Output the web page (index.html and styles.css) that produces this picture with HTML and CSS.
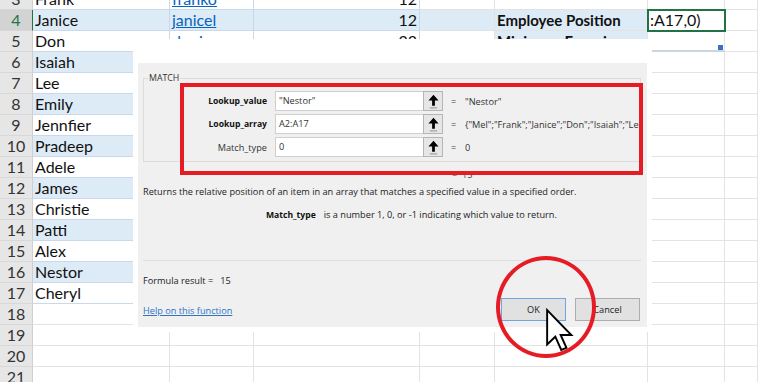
FILE: index.html
```html
<!DOCTYPE html>
<html>
<head>
<meta charset="utf-8">
<link rel="stylesheet" href="styles.css">
</head>
<body>
<div class="sheet">
  <div class="row"><div class="rh">3</div><div class="c t">Frank</div><div class="c t"><span class="lnk">franko</span></div><div class="c t num">12</div><div class="c"></div><div class="c"></div><div class="c"></div><div class="c"></div></div>
  <div class="row"><div class="rh sel">4</div><div class="c t bl">Janice</div><div class="c t bl"><span class="lnk">janicel</span></div><div class="c t bl num">12</div><div class="c bl"></div><div class="c bl b">Employee Position</div><div class="c active">:A17,0)</div><div class="c"></div></div>
  <div class="row"><div class="rh">5</div><div class="c t">Don</div><div class="c t"><span class="lnk">donj</span></div><div class="c t num">23</div><div class="c"></div><div class="c bl b">Minimum Experience</div><div class="c selbot"></div><div class="c"></div></div>
  <div class="row"><div class="rh">6</div><div class="c t bl">Isaiah</div><div class="c t bl"></div><div class="c t bl"></div><div class="c"></div><div class="c"></div><div class="c"></div><div class="c"></div></div>
  <div class="row"><div class="rh">7</div><div class="c t">Lee</div><div class="c t"></div><div class="c t"></div><div class="c"></div><div class="c"></div><div class="c"></div><div class="c"></div></div>
  <div class="row"><div class="rh">8</div><div class="c t bl">Emily</div><div class="c t bl"></div><div class="c t bl"></div><div class="c"></div><div class="c"></div><div class="c"></div><div class="c"></div></div>
  <div class="row"><div class="rh">9</div><div class="c t">Jennfier</div><div class="c t"></div><div class="c t"></div><div class="c"></div><div class="c"></div><div class="c"></div><div class="c"></div></div>
  <div class="row"><div class="rh">10</div><div class="c t bl">Pradeep</div><div class="c t bl"></div><div class="c t bl"></div><div class="c"></div><div class="c"></div><div class="c"></div><div class="c"></div></div>
  <div class="row"><div class="rh">11</div><div class="c t">Adele</div><div class="c t"></div><div class="c t"></div><div class="c"></div><div class="c"></div><div class="c"></div><div class="c"></div></div>
  <div class="row"><div class="rh">12</div><div class="c t bl">James</div><div class="c t bl"></div><div class="c t bl"></div><div class="c"></div><div class="c"></div><div class="c"></div><div class="c"></div></div>
  <div class="row"><div class="rh">13</div><div class="c t">Christie</div><div class="c t"></div><div class="c t"></div><div class="c"></div><div class="c"></div><div class="c"></div><div class="c"></div></div>
  <div class="row"><div class="rh">14</div><div class="c t bl">Patti</div><div class="c t bl"></div><div class="c t bl"></div><div class="c"></div><div class="c"></div><div class="c"></div><div class="c"></div></div>
  <div class="row"><div class="rh">15</div><div class="c t">Alex</div><div class="c t"></div><div class="c t"></div><div class="c"></div><div class="c"></div><div class="c"></div><div class="c"></div></div>
  <div class="row"><div class="rh">16</div><div class="c t bl">Nestor</div><div class="c t bl"></div><div class="c t bl"></div><div class="c"></div><div class="c"></div><div class="c"></div><div class="c"></div></div>
  <div class="row"><div class="rh">17</div><div class="c t">Cheryl</div><div class="c t"></div><div class="c t"></div><div class="c"></div><div class="c"></div><div class="c"></div><div class="c"></div></div>
  <div class="row"><div class="rh">18</div><div class="c"></div><div class="c"></div><div class="c"></div><div class="c"></div><div class="c"></div><div class="c"></div><div class="c"></div></div>
  <div class="row"><div class="rh">19</div><div class="c"></div><div class="c"></div><div class="c"></div><div class="c"></div><div class="c"></div><div class="c"></div><div class="c"></div></div>
  <div class="row"><div class="rh">20</div><div class="c"></div><div class="c"></div><div class="c"></div><div class="c"></div><div class="c"></div><div class="c"></div><div class="c"></div></div>
  <div class="row"><div class="rh">21</div><div class="c"></div><div class="c"></div><div class="c"></div><div class="c"></div><div class="c"></div><div class="c"></div><div class="c"></div></div>
</div>

<div class="dialog">
  <div class="dlg-body">
    <div class="group">
      <span class="group-title">MATCH</span>
      <div class="arg">
        <span class="arg-label strong">Lookup_value</span>
        <div class="arg-input">"Nestor"</div>
        <span class="ref-btn"><svg width="11" height="15" viewBox="0 0 12 16"><polygon points="6,0.5 11.5,7 7.5,7 7.5,12.5 4.5,12.5 4.5,7 0.5,7" fill="#000"/><rect x="2" y="14.5" width="8" height="1" fill="#8a8a8a"/></svg></span>
        <span class="eq">=</span>
        <span class="arg-val">"Nestor"</span>
      </div>
      <div class="arg">
        <span class="arg-label strong">Lookup_array</span>
        <div class="arg-input">A2:A17</div>
        <span class="ref-btn"><svg width="11" height="15" viewBox="0 0 12 16"><polygon points="6,0.5 11.5,7 7.5,7 7.5,12.5 4.5,12.5 4.5,7 0.5,7" fill="#000"/><rect x="2" y="14.5" width="8" height="1" fill="#8a8a8a"/></svg></span>
        <span class="eq">=</span>
        <span class="arg-val">{"Mel";"Frank";"Janice";"Don";"Isaiah";"Lee";"Emily"</span>
      </div>
      <div class="arg">
        <span class="arg-label">Match_type</span>
        <div class="arg-input">0</div>
        <span class="ref-btn"><svg width="11" height="15" viewBox="0 0 12 16"><polygon points="6,0.5 11.5,7 7.5,7 7.5,12.5 4.5,12.5 4.5,7 0.5,7" fill="#000"/><rect x="2" y="14.5" width="8" height="1" fill="#8a8a8a"/></svg></span>
        <span class="eq">=</span>
        <span class="arg-val">0</span>
      </div>
    </div>
    <div class="result-eq">= &nbsp;15</div>
    <p class="desc">Returns the relative position of an item in an array that matches a specified value in a specified order.</p>
    <p class="argdesc"><b class="argname">Match_type</b>is a number 1, 0, or -1 indicating which value to return.</p>
    <div class="sep"></div>
    <div class="formula">Formula result = &nbsp; 15</div>
    <div class="foot">
      <span class="help">Help on this function</span>
      <div class="btns">
        <span class="btn ok">OK</span>
        <span class="btn">Cancel</span>
      </div>
    </div>
  </div>
</div>

<div class="redbox"></div>
<div class="redcircle"></div>
<svg class="cursor" width="30" height="45" viewBox="-1 -1 14 21"><polygon points="0,0 0,16 3.8,12.4 6.6,18.6 9,17.6 6.3,11.6 11.3,11.6" fill="#fff" stroke="#000" stroke-width="0.9" stroke-linejoin="miter"/></svg>
</body>
</html>
```

FILE: styles.css
```css
html, body {
  margin: 0;
  padding: 0;
  background: #fff;
}
body {
  width: 758px;
  height: 382px;
  overflow: hidden;
  position: relative;
  font-family: Lato, "Open Sans", sans-serif;
}

/* spreadsheet */
.sheet {
  margin-top: -11px;
}
.row {
  display: grid;
  grid-template-columns: 33px 137px 84px 166px 75px 153px 77px 1fr;
  height: 21px;
}
.row > div {
  box-sizing: border-box;
  height: 21px;
  border-right: 1px solid #e3e3e3;
  border-bottom: 1px solid #e3e3e3;
  font-size: 16px;
  line-height: 20px;
  color: #111;
  padding: 0 2px;
  white-space: nowrap;
  overflow: hidden;
}
.row > .rh {
  background: #e6e6e6;
  text-align: center;
  color: #333;
  border-right: 1px solid #cfcfcf;
  border-bottom: 1px solid #d8d8d8;
  padding: 0;
}
.row > .rh.sel {
  background: #d3d3d3;
  color: #217346;
  border-right: 1px solid #217346;
}
.row > .t {
  border-right-color: #c9d8ea;
  border-bottom-color: #c9d8ea;
}
.row > .bl {
  background: #ddebf7;
}
.row > .num {
  text-align: right;
}
.row > .b {
  font-weight: 700;
  font-size: 15px;
}
.lnk {
  color: #0563c1;
  text-decoration: underline;
}
.row > .active {
  outline: 2px solid #217346;
  outline-offset: -1px;
  position: relative;
  z-index: 1;
  overflow: visible;
}
.row > .selbot {
  border-bottom: 2px solid #c9d5e2;
  position: relative;
  overflow: visible;
}
.selbot::after {
  content: "";
  position: absolute;
  right: 1px;
  bottom: 0;
  width: 5px;
  height: 5px;
  background: #3b6fc4;
}

/* dialog */
.dialog {
  position: absolute;
  left: 133px;
  top: 39px;
  width: 519px;
  height: 293px;
  box-sizing: border-box;
  background: #fff;
  padding: 24px 5px 5px 5px;
  z-index: 5;
  font-family: "Open Sans", "Noto Sans", sans-serif;
  font-size: 9.2px;
  color: #222;
}
.dlg-body {
  background: #f0f0f0;
  height: 100%;
  box-sizing: border-box;
  padding: 15px 6px 0 5px;
  display: flex;
  flex-direction: column;
}
.group {
  position: relative;
  border: 1px solid #dcdcdc;
  height: 84px;
  box-sizing: border-box;
  padding-top: 12px;
  display: flex;
  flex-direction: column;
  gap: 3px;
}
.group-title {
  position: absolute;
  left: 4px;
  top: -6px;
  background: #f0f0f0;
  padding: 0 1px;
  line-height: 11px;
  color: #333;
  font-size: 8.8px;
}
.arg {
  display: flex;
  align-items: center;
  height: 20px;
}
.arg-label {
  width: 123px;
  text-align: right;
  color: #333;
}
.arg-label.strong {
  font-weight: 700;
  font-size: 8.6px;
  color: #111;
}
.arg-input {
  margin-left: 8px;
  width: 148px;
  height: 20px;
  box-sizing: border-box;
  background: #fff;
  border: 1px solid #cfcfcf;
  border-right: none;
  line-height: 18px;
  padding-left: 3px;
  color: #333;
}
.ref-btn {
  width: 20px;
  height: 20px;
  box-sizing: border-box;
  background: #e6e6e6;
  border: 1px solid #b5b5b5;
  display: flex;
  align-items: center;
  justify-content: center;
}
.eq {
  margin-left: 8px;
  width: 14px;
  color: #444;
}
.arg-val {
  white-space: nowrap;
  overflow: hidden;
  width: 175px;
  color: #333;
}
.result-eq {
  margin-top: 6px;
  height: 14px;
  line-height: 14px;
  padding-left: 309px;
  color: #444;
}
.desc {
  margin: 4px 0 0 0;
  line-height: 12px;
  white-space: nowrap;
}
.argdesc {
  margin: 11px 0 0 123px;
  line-height: 12px;
  white-space: nowrap;
}
.argname {
  font-weight: 700;
  font-size: 8.6px;
  margin-right: 8px;
  color: #111;
}
.sep {
  margin-top: 39px;
  height: 1px;
  background: #dedede;
}
.formula {
  margin-top: 14px;
  line-height: 12px;
}
.foot {
  margin-top: 11px;
  display: flex;
  align-items: center;
  justify-content: space-between;
  height: 23px;
}
.help {
  color: #2f74c8;
  text-decoration: underline;
  margin-top: 1px;
}
.btns {
  display: flex;
  gap: 9px;
  margin-right: 1px;
}
.btn {
  width: 65px;
  height: 23px;
  box-sizing: border-box;
  background: #e1e1e1;
  border: 1px solid #adadad;
  display: flex;
  align-items: center;
  justify-content: center;
  color: #222;
}
.btn.ok {
  border-color: #6ea6e0;
}

/* annotations */
.redbox {
  position: absolute;
  left: 180px;
  top: 83px;
  width: 463px;
  height: 92px;
  box-sizing: border-box;
  border: 4px solid #e61c24;
  z-index: 10;
}
.redcircle {
  position: absolute;
  left: 496px;
  top: 256px;
  width: 100px;
  height: 102px;
  box-sizing: border-box;
  border: 4.5px solid #e61c24;
  border-radius: 50%;
  z-index: 10;
}
.cursor {
  position: absolute;
  left: 545px;
  top: 308px;
  z-index: 11;
}
```
